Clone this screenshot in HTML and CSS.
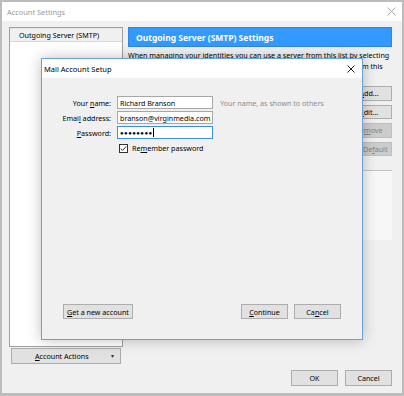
FILE: index.html
```html
<!DOCTYPE html>
<html>
<head>
<meta charset="utf-8">
<link rel="stylesheet" href="styles.css">
</head>
<body>
<div class="window">
  <div class="titlebar">
    <span class="title">Account Settings</span>
    <svg class="close" width="9" height="9" viewBox="0 0 9 9"><path d="M0.5 0.5 L8.5 8.5 M8.5 0.5 L0.5 8.5" stroke="#a8a8a8" stroke-width="1"/></svg>
  </div>
  <div class="content">
    <div class="main">
      <div class="left">
        <div class="list">
          <div class="list-item">Outgoing Server (SMTP)</div>
        </div>
        <div class="btn actions"><span class="actions-label"><u>A</u>ccount Actions</span><span class="arrow">▾</span></div>
      </div>
      <div class="right">
        <div class="header">Outgoing Server (SMTP) Settings</div>
        <p class="desc">When managing your identities you can use a server from this list by selecting it as the Outgoing Server (SMTP), or you can use the default server from this list by selecting "Use Default Server".</p>
        <div class="server-row">
          <div class="server-list"></div>
          <div class="server-buttons">
            <div class="btn"><u>A</u>dd...</div>
            <div class="btn"><u>E</u>dit...</div>
            <div class="btn disabled">Re<u>m</u>ove</div>
            <div class="btn disabled">Set De<u>f</u>ault</div>
          </div>
        </div>
        <div class="details"></div>
      </div>
    </div>
    <div class="footer">
      <div class="btn footer-btn">OK</div>
      <div class="btn footer-btn">Cancel</div>
    </div>
  </div>

  <div class="dialog">
    <div class="dlg-titlebar">
      <span>Mail Account Setup</span>
      <svg class="close" width="8" height="8" viewBox="0 0 8 8"><path d="M0.5 0.5 L7.5 7.5 M7.5 0.5 L0.5 7.5" stroke="#222" stroke-width="1"/></svg>
    </div>
    <div class="dlg-body">
      <div class="form">
        <label class="lbl">Your <u>n</u>ame:</label>
        <div class="field">Richard Branson</div>
        <span class="hint">Your name, as shown to others</span>

        <label class="lbl">Emai<u>l</u> address:</label>
        <div class="field">branson@virginmedia.com</div>
        <span></span>

        <label class="lbl"><u>P</u>assword:</label>
        <div class="field focused"><span class="dots">●●●●●●●●</span><span class="caret"></span></div>
        <span></span>

        <span></span>
        <div class="check-row">
          <span class="checkbox"><svg width="9" height="9" viewBox="0 0 9 9"><path d="M1.8 4.6 L3.6 6.4 L7.2 2.4" stroke="#333" stroke-width="1" fill="none"/></svg></span>
          <span>Re<u>m</u>ember password</span>
        </div>
        <span></span>
      </div>
      <div class="dlg-buttons">
        <div class="btn dlg-btn wide"><u>G</u>et a new account</div>
        <div class="spacer"></div>
        <div class="btn dlg-btn"><u>C</u>ontinue</div>
        <div class="btn dlg-btn">Ca<u>n</u>cel</div>
      </div>
    </div>
  </div>
</div>
</body>
</html>
```

FILE: styles.css
```css
* { box-sizing: border-box; }
html, body { margin: 0; padding: 0; background: #fff; }
body { width: 404px; height: 396px; overflow: hidden; }

.window {
  position: relative;
  width: 404px;
  height: 396px;
  border: 2px solid #bcbcbc;
  border-bottom-width: 3px;
  background: #f0f0f0;
  display: flex;
  flex-direction: column;
  font-family: "Noto Sans", "Open Sans", sans-serif;
  font-size: 7.15px;
  color: #000;
}

.titlebar {
  height: 19px;
  background: #fff;
  display: flex;
  align-items: center;
  justify-content: space-between;
  padding: 0 6px 0 5px;
  color: #9a9a9a;
  font-size: 7.4px;
}

.content {
  flex: 1;
  display: flex;
  flex-direction: column;
  padding: 6px 10px 7px 7px;
}

.main {
  flex: 1;
  display: flex;
  gap: 5px;
}

.left {
  width: 114px;
  display: flex;
  flex-direction: column;
  gap: 1px;
}

.list {
  flex: 1;
  background: #fff;
  border: 1px solid #a0a0a0;
}

.list-item {
  height: 14px;
  line-height: 13px;
  padding-left: 9px;
  background: #f0f0f0;
  border-bottom: 1px solid #d9d9d9;
  border-top: 1px solid #e6e6e6;
}

.btn {
  height: 15px;
  display: flex;
  align-items: center;
  justify-content: center;
  background: #e1e1e1;
  border: 1px solid #adadad;
  color: #000;
  white-space: nowrap;
}

.btn.disabled {
  background: #cccccc;
  border-color: #bfbfbf;
  color: #838383;
}

.actions {
  height: 16px;
  margin: 0 2px 0 2px;
  justify-content: space-between;
  padding: 0 6px 0 23px;
}

.arrow { font-size: 6px; color: #333; }

.right {
  flex: 1;
  display: flex;
  flex-direction: column;
}

.header {
  height: 20px;
  background: #3399ff;
  color: #fff;
  font-weight: bold;
  font-size: 8.5px;
  display: flex;
  align-items: center;
  padding-left: 7px;
  border: 1px solid #2e86e0;
}

.desc {
  margin: 3px 0 0 0;
  line-height: 11px;
  height: 33px;
  overflow: hidden;
}

.server-row {
  display: flex;
  gap: 6px;
  margin-top: 3px;
}

.server-list { flex: 1; height: 78px; background: #fff; border: 1px solid #a0a0a0; }

.server-buttons {
  width: 46px;
  display: flex;
  flex-direction: column;
  gap: 4px;
}

.server-buttons .btn { height: 14.5px; }

.details {
  margin-top: 6px;
  height: 70px;
  background: #f7f7f7;
  border-top: 1px solid #c4c4c4;
}

.footer {
  margin-top: 6px;
  display: flex;
  justify-content: flex-end;
  gap: 7px;
}

.footer-btn { width: 47px; height: 16px; }

/* Dialog overlay */
.dialog {
  position: absolute;
  left: 39px;
  top: 56px;
  width: 322px;
  height: 282px;
  border: 1px solid #6ba0d8;
  background: #f0f0f0;
  box-shadow: 0 0 13px rgba(0, 0, 0, 0.25);
  display: flex;
  flex-direction: column;
}

.dlg-titlebar {
  height: 19px;
  background: #fff;
  display: flex;
  align-items: center;
  justify-content: space-between;
  padding: 0 7px 0 2px;
  font-size: 7.5px;
}

.dlg-body {
  flex: 1;
  display: flex;
  flex-direction: column;
  justify-content: space-between;
  padding: 18px 21px 20px 0;
}

.form {
  display: grid;
  grid-template-columns: 69px 96px auto;
  column-gap: 6px;
  row-gap: 2px;
  align-items: center;
}

.lbl { text-align: right; }

.field {
  height: 13px;
  background: #fff;
  border: 1px solid #a6a6a6;
  padding-left: 2px;
  display: flex;
  align-items: center;
  overflow: hidden;
  white-space: nowrap;
}

.field.focused { border-color: #3c8ee0; }

.dots { font-size: 6px; letter-spacing: 0.45px; }
.caret { width: 1px; height: 9px; background: #000; margin-left: 0; }

.hint { color: #8c8c8c; padding-left: 1px; }

.check-row {
  display: flex;
  align-items: center;
  gap: 4px;
  padding-left: 2px;
  margin-top: 2px;
}

.checkbox {
  width: 9px;
  height: 9px;
  border: 1px solid #333;
  background: #fff;
  display: flex;
}
.checkbox svg { margin: -1px; }

.dlg-buttons {
  display: flex;
  gap: 6px;
  padding-left: 21px;
}

.spacer { flex: 1; }

.dlg-btn { width: 47px; height: 15px; }
.dlg-btn.wide { width: 70px; }
```
